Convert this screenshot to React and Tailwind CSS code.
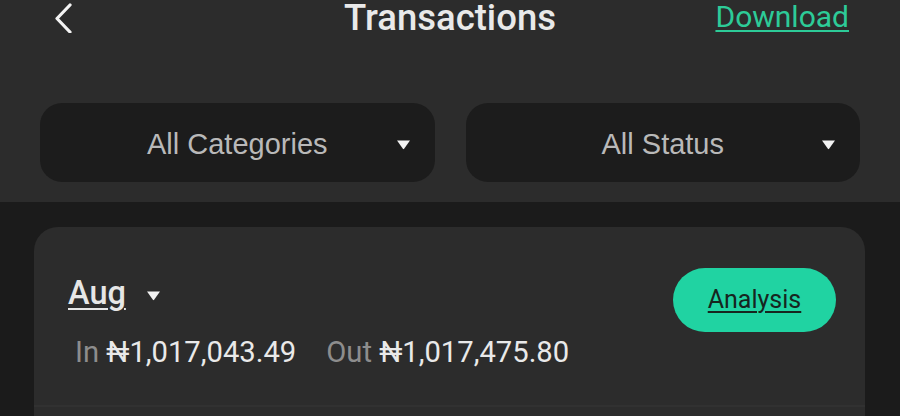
import React from "react";

const Caret = ({ className = "" }) => (
  <svg className={className} width="15" height="11" viewBox="0 0 15 11">
    <path d="M1 1.5 H14 L8.1 9.8 Q7.5 10.6 6.9 9.8 Z" fill="#f2f2f2" />
  </svg>
);

export default function App() {
  return (
    <div
      className="w-[900px] h-[416px] overflow-hidden bg-[#1b1b1b]"
      style={{ fontFamily: "Roboto, 'Liberation Sans', sans-serif" }}
    >
      <div className="bg-[#2c2c2c] h-[202px] flex flex-col">
        <div className="relative h-[36px] flex items-center justify-center">
          <svg
            className="absolute left-[53px] top-[3px]"
            width="20"
            height="30"
            viewBox="0 0 20 30"
          >
            <path
              d="M17 2 L4 15.5 L17 29"
              fill="none"
              stroke="#f4f4f4"
              strokeWidth="3.2"
              strokeLinecap="round"
              strokeLinejoin="round"
            />
          </svg>
          <div className="text-[36.5px] leading-[36px] font-medium text-[#e9e9e9]">
            Transactions
          </div>
          <div className="absolute right-[51px] top-[0px] text-[30px] leading-[34px] text-[#2dcb98] underline underline-offset-[3px] decoration-[2px]">
            Download
          </div>
        </div>
        <div
          className="flex gap-[31px] px-[40px] mt-[67px]"
          style={{ fontFamily: "'Liberation Sans', Arial, sans-serif" }}
        >
          <div className="relative flex-1 h-[79px] rounded-[22px] bg-[#1c1c1c] flex items-center justify-center">
            <span className="text-[29px] text-[#b9b9b9] mt-[4px]">All Categories</span>
            <Caret className="absolute right-[24px] top-[36px]" />
          </div>
          <div className="relative flex-1 h-[79px] rounded-[22px] bg-[#1c1c1c] flex items-center justify-center">
            <span className="text-[29px] text-[#b9b9b9] mt-[4px]">All Status</span>
            <Caret className="absolute right-[24px] top-[36px]" />
          </div>
        </div>
      </div>
      <div className="pt-[25px] px-[34px] pr-[35px]">
        <div className="bg-[#2c2c2c] rounded-t-[24px] h-[200px] flex flex-col">
          <div className="flex justify-between pl-[34px] pr-[29px] pt-[41px]">
            <div className="flex flex-col">
              <div className="flex items-center gap-[20px] h-[50px]">
                <span className="text-[32.5px] leading-none font-medium text-[#e6e6e6] underline underline-offset-[4px] decoration-[2px]">
                  Aug
                </span>
                <Caret className="mt-[4px]" />
              </div>
              <div className="mt-[20px] pl-[7px] text-[29.2px] leading-none flex gap-[30px]">
                <span>
                  <span className="text-[#8d8d8d]">In </span>
                  <span className="text-[#e9e9e9]">₦1,017,043.49</span>
                </span>
                <span>
                  <span className="text-[#8d8d8d]">Out </span>
                  <span className="text-[#e9e9e9]">₦1,017,475.80</span>
                </span>
              </div>
            </div>
            <div className="w-[163px] h-[64px] rounded-full bg-[#20d3a2] flex items-center justify-center">
              <span className="text-[25px] text-[#16261f] underline underline-offset-[3px] decoration-[1.5px]">
                Analysis
              </span>
            </div>
          </div>
          <div className="mt-auto mb-[20px] h-[2px] bg-[#313131]" />
        </div>
      </div>
    </div>
  );
}
